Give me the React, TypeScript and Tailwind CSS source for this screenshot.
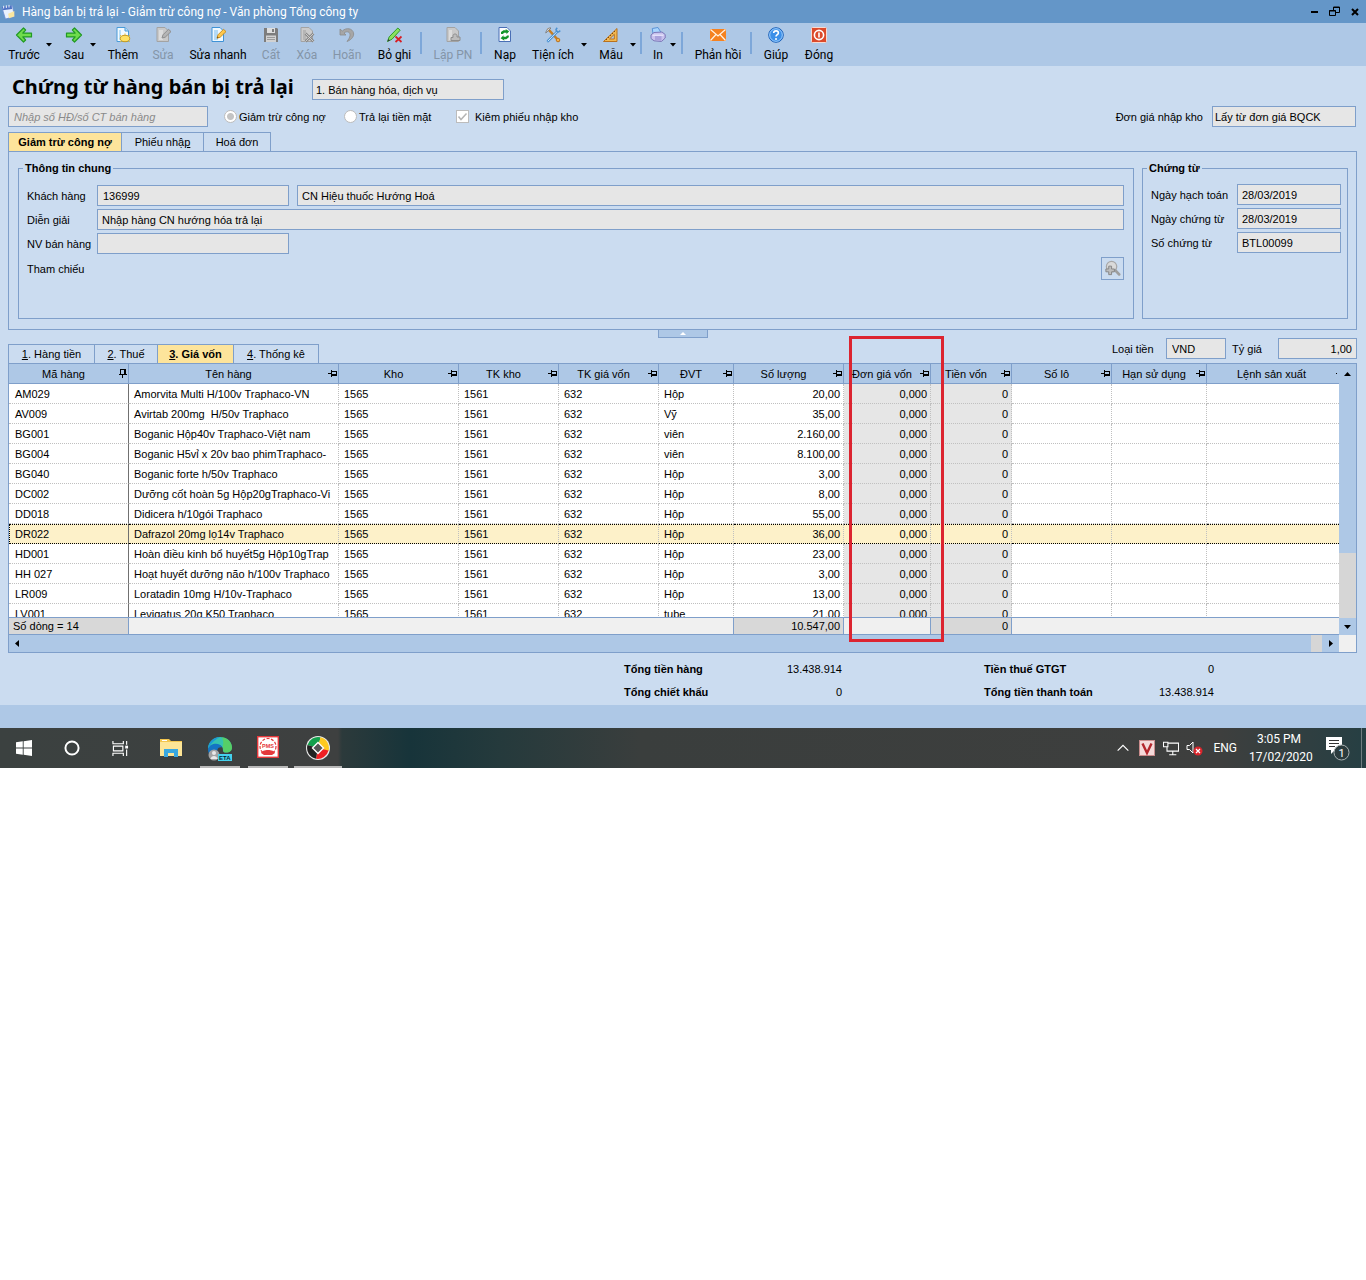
import type { ReactNode } from "react";

const rows = [
    ["AM029", "Amorvita Multi H/100v Traphaco-VN", "Hộp", "20,00"],
    ["AV009", "Avirtab 200mg  H/50v Traphaco", "Vỹ", "35,00"],
    ["BG001", "Boganic Hộp40v Traphaco-Việt nam", "viên", "2.160,00"],
    ["BG004", "Boganic H5vỉ x 20v bao phimTraphaco-", "viên", "8.100,00"],
    ["BG040", "Boganic forte h/50v Traphaco", "Hộp", "3,00"],
    ["DC002", "Dưỡng cốt hoàn 5g Hộp20gTraphaco-Vi", "Hộp", "8,00"],
    ["DD018", "Didicera h/10gói Traphaco", "Hộp", "55,00"],
    ["DR022", "Dafrazol 20mg lọ14v Traphaco", "Hộp", "36,00"],
    ["HD001", "Hoàn điều kinh bổ huyết5g Hộp10gTrap", "Hộp", "23,00"],
    ["HH 027", "Hoạt huyết dưỡng não h/100v Traphaco", "Hộp", "3,00"],
    ["LR009", "Loratadin 10mg H/10v-Traphaco", "Hộp", "13,00"],
    ["LV001", "Levigatus 20g K50 Traphaco", "tube", "21,00"],
];

const selected = "DR022";

const headers = ["Mã hàng", "Tên hàng", "Kho", "TK kho", "TK giá vốn", "ĐVT", "Số lượng", "Đơn giá vốn", "Tiền vốn", "Số lô", "Hạn sử dụng", "Lệnh sản xuất"];

function Cols(){
    return(
        <colgroup>
            <col className="w-[120px]" />
            <col className="w-[210px]" />
            <col className="w-[120px]" />
            <col className="w-[100px]" />
            <col className="w-[100px]" />
            <col className="w-[75px]" />
            <col className="w-[110px]" />
            <col className="w-[87px]" />
            <col className="w-[81px]" />
            <col className="w-[100px]" />
            <col className="w-[95px]" />
            <col />
        </colgroup>
    );
}

function Icon({children, className = "size-[18px]"}: {children: ReactNode, className?: string}){
    return(
        <svg viewBox="0 0 18 18" className={className} fill="none" aria-hidden="true">
            {children}
        </svg>
    );
}

function ArrowIcon({flip}: {flip?: boolean}){
    return(
        <Icon>
            <path
                d="M1.5 9 8.5 2 10.6 4 7.8 7.1H16.5V10.9H7.8L10.6 14 8.5 16Z"
                transform={flip ? "matrix(-1 0 0 1 18 0)" : undefined}
                fill="#6fdc4c" stroke="#219a24" strokeWidth="1.2" strokeLinejoin="round"
            />
        </Icon>
    );
}

const page = "M3 1.5H11L14.5 5V15.5H3Z";

const icons: Record<string, ReactNode> = {
    back: <ArrowIcon />,
    next: <ArrowIcon flip />,
    add: (
        <Icon>
            <path d={page} fill="#f2faff" stroke="#4a9bd8" />
            <path d="M11 1.5V5H14.5" fill="#b5dcf7" stroke="#4a9bd8" />
            <path d="M5 4V14H7V4Z" fill="#b9dff8" />
            <ellipse cx="11" cy="12.5" rx="4.7" ry="3.2" fill="#ffe263" stroke="#c99a1e" />
            <path d="M6 9 7.5 10.5M11 7.5V9M16 9 14.5 10.5M6 16 7.5 15M16 16 15 15" stroke="#e5bd3b" />
        </Icon>
    ),
    edit: (
        <Icon>
            <path d={page} fill="#c9c9c9" stroke="#a3a3a3" />
            <path d="M5 4H9V14H5Z" fill="#dcdcdc" />
            <path d="M8 12 9 8.8 14.5 3.3 17 5.6 11.2 11.2Z" fill="#b5b5b5" stroke="#8e8e8e" />
        </Icon>
    ),
    quick: (
        <Icon>
            <path d={page} fill="#eef8ff" stroke="#3f92d6" />
            <path d="M5 4H9V14H5Z" fill="#b3daf7" />
            <path d="M8 12.2 9 8.8 14.5 3.3 17 5.6 11.2 11.2Z" fill="#ffc84d" stroke="#c98f24" />
            <path d="M8 12.2 8.5 10.5 9.7 11.7Z" fill="#6b4a12" />
        </Icon>
    ),
    save: (
        <Icon>
            <path d="M2 2H15L16 3V16H2Z" fill="#7d7d7d" />
            <path d="M5 2H13V7H5Z" fill="#dedede" />
            <path d="M10 3H12V6H10Z" fill="#7d7d7d" />
            <path d="M4 9.5H14V16H4Z" fill="#d2d2d2" />
            <path d="M5 11.5H13M5 13.5H13" stroke="#9a9a9a" />
        </Icon>
    ),
    remove: (
        <Icon>
            <path d={page} fill="#cbcbcb" stroke="#a3a3a3" />
            <path d="M5 4H8V14H5Z" fill="#b5b5b5" />
            <path d="M7.5 7.5 15.5 15.5M15.5 7.5 7.5 15.5" stroke="#8a8a8a" strokeWidth="2.6" />
            <path d="M7.5 7.5 15.5 15.5M15.5 7.5 7.5 15.5" stroke="#dcdcdc" strokeWidth="0.8" />
        </Icon>
    ),
    undo: (
        <Icon>
            <path d="M2 3V9H8L6 7C9 4.6 12.5 6 12 9.5C11.8 11.5 10.5 13.5 9 15.5C14 13.5 16.3 10 15.5 6.8C14.5 2.5 8.5 1 4.3 5Z" fill="#a6a6a6" stroke="#8c8c8c" strokeWidth="0.8" />
        </Icon>
    ),
    unpost: (
        <Icon>
            <path d="M1.5 15.5 3.2 10.8 11.8 2 14.2 4.2 6 13.2Z" fill="#8be05e" stroke="#2f9b2c" />
            <path d="M1.5 15.5 2.4 13 4 14.5Z" fill="#333" />
            <path d="M9.5 10.5 15.5 16M15.5 10.5 9.5 16" stroke="#d81e24" strokeWidth="1.7" />
        </Icon>
    ),
    receipt: (
        <Icon>
            <path d={page} fill="#c9c9c9" stroke="#a3a3a3" />
            <path d="M5 4H8V14H5Z" fill="#dcdcdc" />
            <path d="M7 14V11.5H9V9.5C9 7.5 13 7.5 13 9.5V11H16V14.5H7Z" fill="#bdbdbd" stroke="#8e8e8e" />
        </Icon>
    ),
    reload: (
        <Icon>
            <path d={page} fill="#fdfdff" stroke="#4a6fb5" />
            <path d="M5 8V6L7.5 4.3H10L9.5 3 13.2 5.3 10.5 8.2V6.7H8L7 8Z" fill="#11952a" />
            <path d="M12.8 9.5V11.3L10.3 13.2H8L8.5 14.7 4.6 12.2 7.5 9.3V10.8H10L11 9.5Z" fill="#11952a" />
        </Icon>
    ),
    tools: (
        <Icon>
            <path d="M4.5 3.5 14.5 14.5" stroke="#c77e22" strokeWidth="2.6" strokeLinecap="round" />
            <path d="M1.8 7 7 2C4.8 1.3 2.3 3.6 1.8 7Z" fill="#e4e4e4" stroke="#7f7f7f" />
            <path d="M4 15 13 5.8" stroke="#4b91d2" strokeWidth="2.6" strokeLinecap="round" />
            <path d="M4 15 13 5.8" stroke="#cfe7fa" strokeLinecap="round" />
            <path d="M13.2 1.8 12 3.5 12.5 5.5 14.6 6 16.3 4.7" stroke="#4b91d2" strokeWidth="1.5" />
            <circle cx="14" cy="14" r="1.8" fill="#f4b04c" stroke="#b97420" />
        </Icon>
    ),
    template: (
        <Icon>
            <path d="M1.5 15.5 15 2.5V15.5Z" fill="#f3b951" stroke="#b9711d" />
            <path d="M7.5 13 12.3 8.3V13Z" fill="#aec8e6" stroke="#b9711d" />
            <path d="M4 13 5 14M6 11 7 12M8 9 9 10M10 7 11 8M12 5 13 6" stroke="#7d4a0e" />
        </Icon>
    ),
    print: (
        <Icon>
            <path d="M4 8 3.3 2.5 9 1.5 12 6.5Z" fill="#a8d5ff" stroke="#5b93d6" />
            <path d="M2 9 5 6.5 13 6 16.2 8.5V12L12.5 15.5 5 14.8 2 12.5Z" fill="#c9c3ee" stroke="#7d78b8" />
            <path d="M6 10H12.5V15L6 14Z" fill="#aaa2dc" />
            <path d="M3.5 9.2H14.5" stroke="#efeeff" />
        </Icon>
    ),
    feedback: (
        <Icon>
            <path d="M1 3H17V15H1Z" fill="#f58220" />
            <path d="M1.5 3.5 9 10 16.5 3.5M1.5 14.5 7 8.5M16.5 14.5 11 8.5" stroke="#fff3e4" strokeWidth="1.2" />
        </Icon>
    ),
    help: (
        <Icon>
            <circle cx="9" cy="9" r="7.3" fill="#3b8fe8" stroke="#1f62b8" />
            <circle cx="9" cy="9" r="6.3" stroke="#9fcfff" />
            <path d="M6.7 7C6.7 4.2 11.4 4.2 11.4 7C11.4 8.6 9 8.8 9 10.6" stroke="#fff" strokeWidth="1.6" />
            <circle cx="9" cy="13" r="1" fill="#fff" />
        </Icon>
    ),
    close: (
        <Icon>
            <rect x="1.5" y="1.5" width="15" height="15" rx="1" fill="#dc4a2b" stroke="#f7d9cf" />
            <circle cx="9" cy="9" r="4.6" stroke="#fff" strokeWidth="1.6" />
            <path d="M9 6.5V11.5" stroke="#fff" strokeWidth="1.6" />
        </Icon>
    ),
};

const toolbar = [
    {label: "Trước", icon: "back", box: "w-[44px]"},
    {arrow: true, box: ""},
    {label: "Sau", icon: "next", box: "w-[32px] ml-[6px]"},
    {arrow: true, box: ""},
    {label: "Thêm", icon: "add", box: "w-[40px] ml-[7px]"},
    {label: "Sửa", icon: "edit", box: "w-[40px]", off: true},
    {label: "Sửa nhanh", icon: "quick", box: "w-[70px]"},
    {label: "Cất", icon: "save", box: "w-[36px]", off: true},
    {label: "Xóa", icon: "remove", box: "w-[36px]", off: true},
    {label: "Hoãn", icon: "undo", box: "w-[44px]", off: true},
    {label: "Bỏ ghi", icon: "unpost", box: "w-[51px]"},
    {sep: true, box: ""},
    {label: "Lập PN", icon: "receipt", box: "w-[54px] ml-1", off: true},
    {sep: true, box: ""},
    {label: "Nạp", icon: "reload", box: "w-[40px] ml-[3px]"},
    {label: "Tiện ích", icon: "tools", box: "w-[56px]"},
    {arrow: true, box: ""},
    {label: "Mẫu", icon: "template", box: "w-[38px] ml-[5px]"},
    {arrow: true, box: ""},
    {sep: true, box: "ml-1"},
    {label: "In", icon: "print", box: "w-[24px] ml-1"},
    {arrow: true, box: ""},
    {sep: true, box: "ml-[5px]"},
    {label: "Phản hồi", icon: "feedback", box: "w-[60px] ml-[5px]"},
    {sep: true, box: "ml-[2px]"},
    {label: "Giúp", icon: "help", box: "w-[40px] ml-1"},
    {label: "Đóng", icon: "close", box: "w-[46px]"},
];

function Toolbar(){
    return(
        <div className="flex h-[43px] bg-[#aec8e6] pl-[2px] font-[Roboto,sans-serif] text-xs">
            {toolbar.map((item, key) => {
                if(item.sep) return <div key={key} className={`mt-[9px] h-[22px] w-[2px] bg-[#7da7d9] ${item.box}`} />;
                if(item.arrow) return(
                    <button key={key} aria-label="Mở danh sách" className="h-full w-[6px]">
                        <svg viewBox="0 0 6 4" className="h-[4px] w-[6px]"><path d="M0 0H6L3 3.5Z" fill="#000" /></svg>
                    </button>
                );
                return(
                    <button key={key} disabled={item.off} className={`flex shrink-0 flex-col items-center whitespace-nowrap pt-[3px] disabled:text-[#8495a8] ${item.box}`}>
                        {icons[item.icon as string]}
                        <span className="mt-[3px] leading-4">{item.label}</span>
                    </button>
                );
            })}
        </div>
    );
}

function Field({value, label, className = ""}: {value: string, label: string, className?: string}){
    return <input readOnly aria-label={label} defaultValue={value} className={`h-[21px] border border-[#7f9fca] bg-[#e6e6e6] px-1 outline-none ${className}`} />;
}

function Pin({down}: {down?: boolean}){
    return(
        <svg viewBox="0 0 9 9" className="size-[9px] shrink-0" shapeRendering="crispEdges" aria-hidden="true">
            {down
                ? <path d="M2 0H8V1H2ZM2 1H3V5H2ZM6 1H8V5H6ZM1 5H9V6H1ZM4 6H5V9H4Z" fill="#000" />
                : <path d="M0 4H3V5H0ZM3 1H4V8H3ZM4 2H9V3H4ZM8 3H9V5H8ZM4 5H9V7H4Z" fill="#000" />}
        </svg>
    );
}

function VoucherInfo(){
    return(
        <div className="flex h-[179px] gap-2 border border-[#7f9fca] px-[9px] pb-[10px] pr-2 pt-2">
            <fieldset className="min-w-0 flex-1 border border-[#7f9fca] pl-2 pr-[9px]">
                <legend className="-ml-1 px-[2px] font-bold leading-4">Thông tin chung</legend>
                <div className="flex flex-col gap-[3px] pt-[9px]">
                    <div className="flex items-center">
                        <span className="w-[70px] shrink-0">Khách hàng</span>
                        <Field label="Mã khách hàng" value="136999" className="w-[192px] pl-[5px]" />
                        <Field label="Tên khách hàng" value="CN Hiệu thuốc Hướng Hoá" className="ml-2 min-w-0 flex-1" />
                    </div>
                    <div className="flex items-center">
                        <span className="w-[70px] shrink-0">Diễn giải</span>
                        <Field label="Diễn giải" value="Nhập hàng CN hướng hóa trả lại" className="min-w-0 flex-1" />
                    </div>
                    <div className="flex items-center">
                        <span className="w-[70px] shrink-0">NV bán hàng</span>
                        <Field label="NV bán hàng" value="" className="w-[192px]" />
                    </div>
                    <div className="flex h-[23px] items-center justify-between">
                        <span>Tham chiếu</span>
                        <button aria-label="Tìm chứng từ tham chiếu" className="flex size-[23px] items-center justify-center border border-[#7f9fca]">
                            <Icon className="size-[17px]">
                                <circle cx="8" cy="7" r="5.5" fill="#dadada" stroke="#a8a8a8" strokeWidth="1.3" />
                                <path d="M12 11 16 15.2" stroke="#9e9e9e" strokeWidth="3" strokeLinecap="round" />
                                <path d="M5 6.5H8V9.5H11V12.5H8V15.5H5V12.5H2V9.5H5Z" fill="#bdbdbd" stroke="#858585" />
                            </Icon>
                        </button>
                    </div>
                </div>
            </fieldset>
            <fieldset className="w-[206px] border border-[#7f9fca] pl-2 pr-[6px]">
                <legend className="-ml-1 px-[2px] font-bold leading-4">Chứng từ</legend>
                <div className="flex flex-col gap-[3px] pt-2">
                    {[["Ngày hạch toán", "28/03/2019"], ["Ngày chứng từ", "28/03/2019"], ["Số chứng từ", "BTL00099"]].map(([label, value]) => (
                        <div key={label} className="flex items-center">
                            <span className="w-[86px] shrink-0">{label}</span>
                            <Field label={label} value={value} className="w-[104px]" />
                        </div>
                    ))}
                </div>
            </fieldset>
        </div>
    );
}

function ItemGrid(){
    const cell = "h-5 overflow-hidden whitespace-pre border-b border-r border-dotted p-0";
    return(
        <div className="border border-[#7f9fca]">
            <div className="flex">
                <div className="min-w-0 flex-1">
                    <div className="h-[253px] overflow-hidden bg-white">
                        <table className="w-full table-fixed border-separate border-spacing-0">
                            <Cols />
                            <thead>
                                <tr>
                                    {headers.map((name, key) => (
                                        <th key={name} className={`h-5 border-b border-[#7f9fca] bg-[#aec8e6] p-0 font-normal ${key < 11 ? "border-r" : ""}`}>
                                            <div className="flex items-center whitespace-nowrap pr-px">
                                                <span className="min-w-0 flex-1">{name}</span>
                                                {key < 11 ? <Pin down={key === 0} /> : <i className="mr-px size-px bg-black" />}
                                            </div>
                                        </th>
                                    ))}
                                </tr>
                            </thead>
                            <tbody>
                                {rows.map(([code, name, unit, qty]) => {
                                    const on = code === selected;
                                    const line = on ? "border-b-black border-t border-t-black border-r-[#c0c0c0]" : "border-[#c0c0c0]";
                                    const grey = on ? "" : "bg-[#e6e6e6]";
                                    return(
                                        <tr key={code} className={on ? "bg-[#fdf1c9]" : ""}>
                                            <td className={`${cell} ${line} ${on ? "border-l border-l-black pl-[5px]" : "pl-[6px]"}`} style={{borderRightStyle: "solid", borderRightColor: "#707070"}}>{code}</td>
                                            <td className={`${cell} pl-[5px] ${line}`}>{name}</td>
                                            <td className={`${cell} pl-[5px] ${line}`}>1565</td>
                                            <td className={`${cell} pl-[5px] ${line}`}>1561</td>
                                            <td className={`${cell} pl-[5px] ${line}`}>632</td>
                                            <td className={`${cell} pl-[5px] ${line}`}>{unit}</td>
                                            <td className={`${cell} pr-[3px] text-right ${line}`}>{qty}</td>
                                            <td className={`${cell} pr-[3px] text-right ${line} ${grey}`}>0,000</td>
                                            <td className={`${cell} pr-[3px] text-right ${line} ${grey}`}>0</td>
                                            <td className={`${cell} ${line}`}></td>
                                            <td className={`${cell} ${line}`}></td>
                                            <td className={`${cell} ${line} border-r-0`}></td>
                                        </tr>
                                    );
                                })}
                            </tbody>
                        </table>
                    </div>
                    <table className="w-full table-fixed border-separate border-spacing-0 bg-[#f0f0f0]">
                        <Cols />
                        <tbody>
                            <tr className="leading-4 [&>td]:h-[18px] [&>td]:border-y [&>td]:border-[#7f9fca]">
                                <td className="border-r bg-[#d8d8d8] p-0 pl-1">Số dòng = 14</td>
                                <td colSpan={5} className="border-r p-0"></td>
                                <td className="border-r bg-[#d8d8d8] p-0 pr-[3px] text-right">10.547,00</td>
                                <td className="border-r p-0"></td>
                                <td className="border-r bg-[#d8d8d8] p-0 pr-[3px] text-right">0</td>
                                <td colSpan={3} className="p-0"></td>
                            </tr>
                        </tbody>
                    </table>
                </div>
                <div className="flex w-[17px] flex-col items-center bg-[#aec8e6]">
                    <button aria-label="Cuộn lên" className="flex h-5 w-full items-center justify-center">
                        <svg viewBox="0 0 7 4" className="h-[4px] w-[7px]"><path d="M0 4H7L3.5 0Z" /></svg>
                    </button>
                    <div className="flex-1" />
                    <div className="h-[65px] w-full bg-[#d6d6d6]" />
                    <button aria-label="Cuộn xuống" className="flex h-[17px] w-full items-center justify-center">
                        <svg viewBox="0 0 7 4" className="h-[4px] w-[7px]"><path d="M0 0H7L3.5 4Z" /></svg>
                    </button>
                </div>
            </div>
            <div className="flex h-[17px] bg-[#aec8e6]">
                <button aria-label="Cuộn trái" className="flex h-full w-4 items-center justify-center">
                    <svg viewBox="0 0 4 7" className="h-[7px] w-[4px]"><path d="M4 0V7L0 3.5Z" /></svg>
                </button>
                <div className="flex-1" />
                <div className="w-[11px] bg-[#d6d6d6]" />
                <button aria-label="Cuộn phải" className="flex h-full w-[17px] items-center justify-center">
                    <svg viewBox="0 0 4 7" className="h-[7px] w-[4px]"><path d="M0 0V7L4 3.5Z" /></svg>
                </button>
                <div className="w-[17px] bg-[#f0f0f0]" />
            </div>
        </div>
    );
}

function Total({label, value}: {label: string, value: string}){
    return(
        <div className="flex h-[23px] items-center justify-between">
            <dt className="font-bold">{label}</dt>
            <dd>{value}</dd>
        </div>
    );
}

function Taskbar(){
    return(
        <footer className="flex h-10 items-stretch justify-between bg-[linear-gradient(90deg,#3b4140_0,#3e4040_338px,#2c3a3b_342px,#17343a_410px,#253a3c_500px,#3a3e3d_640px,#3e3f3e_1220px,#263f43_1366px)] font-[Roboto,sans-serif] text-xs text-white">
            <div className="flex">
                <button aria-label="Start" className="flex w-12 items-center justify-center">
                    <Icon className="size-4"><path d="M0 2.6 7.6 1.5V8.5H0ZM8.6 1.4 18 0V8.5H8.6ZM0 9.5H7.6V16.5L0 15.4ZM8.6 9.5H18V18L8.6 16.6Z" fill="#fff" /></Icon>
                </button>
                <button aria-label="Cortana" className="flex w-12 items-center justify-center">
                    <Icon className="size-4"><circle cx="9" cy="9" r="7.4" stroke="#fff" strokeWidth="2.2" /></Icon>
                </button>
                <button aria-label="Task view" className="flex w-12 items-center justify-center">
                    <Icon className="size-[17px]"><path d="M1 1V4H12V1M1 17V14H12V17M1.5 6.5H11.5V11.5H1.5ZM15.5 1V5M15.5 10V17" stroke="#fff" strokeWidth="1.2" /><path d="M14 6H17V9H14Z" fill="#fff" /></Icon>
                </button>
                <button aria-label="File Explorer" className="ml-1 flex w-[46px] items-center justify-center">
                    <svg viewBox="0 0 22 20" className="h-5 w-[22px]">
                        <path d="M0 1H9L11 3H22V18H0Z" fill="#f3c64f" />
                        <path d="M0 4H22V18H0Z" fill="#fde596" />
                        <path d="M2 2H7V3H2Z" fill="#fff" />
                        <path d="M4 19V11H18V19H14V15H8V19Z" fill="#3aa8e0" />
                    </svg>
                </button>
                <button aria-label="Microsoft Edge Beta" className="ml-[2px] flex h-full w-12 flex-col items-center justify-end px-1">
                    <svg viewBox="0 0 24 24" className="mb-[5px] h-6 w-6 shrink-0">
                        <path d="M0 12C0 5 5.500 0 12 0C19 0 24 4.800 24 10.500C24 14.500 20.500 16 17 15.500C14 15 15.500 13 14.500 10.500C13 7 5 6 0 12Z" fill="#35c3b1" />
                        <path d="M14 .2C20 .8 24 5.500 24 10.500C24 14.500 20.500 16 17 15.500C14.500 15 16 13 14.500 10C16 6 15 3 14 .2Z" fill="#62d34f" opacity=".75" />
                        <path d="M0 12C2 5.500 12 5 14.500 10.500C10 9 8 13 10 17L11 22C4 22 0 18 0 12Z" fill="#1474c4" />
                        <path d="M0 11C1 4 6 0 12 0C8 2 4 5 0 11Z" fill="#1b9ad8" />
                        <circle cx="6" cy="18" r="5.500" fill="#a3a3a3" />
                        <circle cx="6" cy="16" r="2" fill="#e8e8e8" />
                        <path d="M2.500 22C3 18 9 18 9.500 22Z" fill="#e8e8e8" />
                        <rect x="10" y="17" width="14" height="7" fill="#45d2ee" />
                        <text x="11" y="23" fontSize="6" fontWeight="700" fontFamily="Liberation Sans, sans-serif" fill="#062733">ETA</text>
                    </svg>
                    <i className="h-[2px] w-10 shrink-0 bg-[#b9b9b9]" />
                </button>
                <button aria-label="PMS" className="flex h-full w-12 flex-col items-center justify-end">
                    <svg viewBox="0 0 22 22" className="mb-[8px] size-[22px] shrink-0">
                        <rect x=".7" y=".7" width="20.600" height="20.600" fill="#fff" stroke="#e5383b" strokeWidth="1.400" />
                        <circle cx="11" cy="10.500" r="8" fill="none" stroke="#e5383b" strokeWidth="1.200" strokeDasharray="3 1.500" />
                        <path d="M4 17C5 13 17 13 18 17L15 19H7Z" fill="#e5383b" />
                        <text x="11" y="11.500" textAnchor="middle" fontSize="5.500" fontWeight="700" fontFamily="Liberation Sans, sans-serif" fill="#e5383b">PMS</text>
                    </svg>
                    <i className="h-[2px] w-10 shrink-0 bg-[#b9b9b9]" />
                </button>
                <button aria-label="UltraViewer" className="ml-[2px] flex h-full w-12 flex-col items-center justify-end">
                    <svg viewBox="0 0 24 24" className="mb-[6px] size-6 shrink-0">
                        <circle cx="12" cy="12" r="12" fill="#e9e9e9" />
                        <path d="M12 12 1.500 9A11 11 0 0 1 14.500 1.300Z" fill="#12a04c" />
                        <path d="M12 12 14.500 1.300A11 11 0 0 1 22.500 15Z" fill="#ffc91f" />
                        <path d="M12 12 22.500 14.500A11 11 0 0 1 10 22.800Z" fill="#f01f23" />
                        <path d="M12 12 10 22.800A11 11 0 0 1 1.500 9Z" fill="#222" />
                        <path d="M12 6.500 17.500 12 12 17.500 6.500 12Z" fill="#555" stroke="#fff" strokeWidth="1.300" />
                    </svg>
                    <i className="h-[2px] w-12 shrink-0 bg-[#b9b9b9]" />
                </button>
            </div>
            <div className="flex items-center">
                <Icon className="size-3"><path d="M1 13 9 5 17 13" stroke="#fff" strokeWidth="1.8" /></Icon>
                <svg viewBox="0 0 16 16" className="ml-[10px] size-4" aria-hidden="true">
                    <rect x=".5" y=".5" width="15" height="15" fill="#f5dada" stroke="#c98c8c" />
                    <path d="M3.500 3.500 8 13 12.500 3.500" fill="none" stroke="#b3272d" strokeWidth="2.400" />
                </svg>
                <Icon className="ml-2 size-4"><path d="M5.500 3.500H17.500V12.500H4.500V8M11 12.500V16M7 16.500H15M.5 2.500H5.500V7.500H.5Z" stroke="#fff" strokeWidth="1.2" /></Icon>
                <svg viewBox="0 0 17 16" className="ml-[7px] h-4 w-[17px]" aria-hidden="true">
                    <path d="M1 5.500H3.500L7 2V13L3.500 9.500H1Z" fill="none" stroke="#fff" />
                    <circle cx="12" cy="11" r="4.500" fill="#d9262c" />
                    <path d="M10 9 14 13M14 9 10 13" stroke="#fff" strokeWidth="1.200" />
                </svg>
                <span className="ml-[10px]">ENG</span>
                <div className="ml-3 w-[60px] text-center leading-[18px]">
                    <div>3:05 PM</div>
                    <div>17/02/2020</div>
                </div>
                <button aria-label="Thông báo" className="ml-4 flex h-full w-[26px] items-center">
                    <svg viewBox="0 0 26 26" className="size-[26px]">
                        <path d="M1 2H17V15H10L6 19V15H1Z" fill="#fff" />
                        <path d="M4 5.500H14M4 8.500H14M4 11.500H10" stroke="#333" />
                        <circle cx="16.500" cy="17.500" r="7.500" fill="#2b3b3d" stroke="#a9b1b2" />
                        <text x="16.500" y="21.500" textAnchor="middle" fontSize="11" fontFamily="Roboto, sans-serif" fill="#fff">1</text>
                    </svg>
                </button>
                <i className="ml-[10px] mr-1 h-full w-px bg-[#6f7d80]" />
            </div>
        </footer>
    );
}

export default function App(){
    const tab = "h-full border-r border-t border-[#7f9fca]";
    const activeTab = "h-full border-r border-t border-[#7f9fca] bg-[#fde49b] font-bold";
    return(
        <div className="bg-[#cbdcf0] font-['Liberation_Sans',sans-serif] text-[11px] leading-4 text-black">
            <header className="flex h-[23px] items-center bg-[#6496c8] pl-[1px] pr-[7px] font-[Roboto,sans-serif] text-xs text-white">
                <Icon className="size-4">
                    <path d="M1 4 13 2 15 14 5 17Z" fill="#e9f1ff" stroke="#6f8fd0" />
                    <path d="M1 3.500 12 2 12.500 5.500 2 7Z" fill="#4f73c4" />
                    <path d="M3 2V5M6 1.500V4.500M9 1V4" stroke="#fff" />
                    <path d="M8 11 15 8V14L9 16Z" fill="#fbe7a0" />
                </Icon>
                <h1 className="ml-[5px] flex-1">Hàng bán bị trả lại - Giảm trừ công nợ - Văn phòng Tổng công ty</h1>
                <div className="flex items-center gap-[11px]">
                    <button aria-label="Thu nhỏ"><svg viewBox="0 0 7 11" className="h-[11px] w-[7px]"><path d="M0 5H7V7H0Z" /></svg></button>
                    <button aria-label="Khôi phục"><svg viewBox="0 0 11 11" className="h-[11px] w-[11px]" fill="none" stroke="#000"><path d="M4.500 4V1H10.500V6.500H7M.5 4.500H6.500V9.500H.5ZM4 1.500H11M0 5H7" /></svg></button>
                    <button aria-label="Đóng cửa sổ"><svg viewBox="0 0 8 8" className="size-2" stroke="#000" strokeWidth="2"><path d="M1 1 7 7M7 1 1 7" /></svg></button>
                </div>
            </header>
            <Toolbar />
            <main className="pl-2 pr-[9px]">
                <div className="flex h-10 items-start pt-[13px]">
                    <h2 className="w-[304px] whitespace-nowrap pl-1 font-['Noto_Sans',sans-serif] text-xl font-bold leading-4">Chứng từ hàng bán bị trả lại</h2>
                    <Field label="Loại chứng từ" value="1. Bán hàng hóa, dịch vụ" className="w-[192px] pl-[3px]" />
                </div>
                <div className="flex items-center">
                    <input aria-label="Số chứng từ bán hàng" placeholder="Nhập số HĐ/số CT bán hàng" className="h-[21px] w-[200px] border border-[#7f9fca] bg-[#e6e6e6] px-[5px] italic placeholder:text-[#8a8a8a]" />
                    <label className="ml-4 flex w-[120px] items-center gap-[2px]">
                        <input type="radio" name="kind" defaultChecked className="size-[13px] appearance-none rounded-full border border-[#bcbcbc] bg-white bg-[radial-gradient(circle,#c4c4c4_3px,#fff_4px)]" />
                        Giảm trừ công nợ
                    </label>
                    <label className="flex w-[112px] items-center gap-[2px]">
                        <input type="radio" name="kind" className="size-[13px] appearance-none rounded-full border border-[#bcbcbc] bg-white" />
                        Trả lại tiền mặt
                    </label>
                    <label className="flex flex-1 items-center gap-[6px]">
                        <span className="grid size-[13px]">
                            <input type="checkbox" defaultChecked className="col-start-1 row-start-1 size-[13px] appearance-none border border-[#bcbcbc] bg-white" />
                            <svg viewBox="0 0 13 13" className="pointer-events-none col-start-1 row-start-1 size-[13px]" fill="none" stroke="#b5b5b5" strokeWidth="1.500"><path d="M2.500 6.500 5 9.500 10.500 3.500" /></svg>
                        </span>
                        Kiêm phiếu nhập kho
                    </label>
                    <span className="mr-[9px]">Đơn giá nhập kho</span>
                    <Field label="Đơn giá nhập kho" value="Lấy từ đơn giá BQCK" className="mr-px w-[144px] pl-[2px]" />
                </div>
                <div className="mt-[5px] flex h-[19px] border-l border-[#7f9fca]">
                    <button className={`${activeTab} w-[113px]`}>Giảm trừ công nợ</button>
                    <button className={`${tab} w-[82px]`}>Phiếu nhậ<u>p</u></button>
                    <button className={`${tab} w-[67px]`}>Hoá đơn</button>
                </div>
                <VoucherInfo />
                <div className="flex justify-center">
                    <button aria-label="Thu gọn" className="flex h-[8px] w-[50px] items-center justify-center border border-t-0 border-[#7f9fca] bg-[#aec8e6]">
                        <svg viewBox="0 0 6 3" className="h-[3px] w-[6px]"><path d="M0 3H6L3 0Z" fill="#fff" /></svg>
                    </button>
                </div>
                <section className="relative">
                    <div className="flex h-[25px] items-start justify-between">
                        <div className="mt-[6px] flex h-[19px] border-l border-[#7f9fca]">
                            <button className={`${tab} w-[86px]`}><u>1</u>. Hàng tiền</button>
                            <button className={`${tab} w-[63px]`}><u>2</u>. Thuế</button>
                            <button className={`${activeTab} w-[76px]`}><u>3</u>. Giá vốn</button>
                            <button className={`${tab} w-[85px]`}><u>4</u>. Thống kê</button>
                        </div>
                        <div className="flex items-center">
                            <span className="w-[54px]">Loại tiền</span>
                            <Field label="Loại tiền" value="VND" className="w-[60px] pl-[5px]" />
                            <span className="ml-[6px] w-[46px]">Tỷ giá</span>
                            <Field label="Tỷ giá" value="1,00" className="w-[79px] text-right" />
                        </div>
                    </div>
                    <ItemGrid />
                    <div className="pointer-events-none absolute -top-[2px] left-[841px] h-[306px] w-[95px] border-[3px] border-[#dc2430]" />
                </section>
                <dl className="flex justify-end gap-[142px] pb-[2px] pr-[143px] pt-1">
                    <div className="w-[218px]">
                        <Total label="Tổng tiền hàng" value="13.438.914" />
                        <Total label="Tổng chiết khấu" value="0" />
                    </div>
                    <div className="w-[230px]">
                        <Total label="Tiền thuế GTGT" value="0" />
                        <Total label="Tổng tiền thanh toán" value="13.438.914" />
                    </div>
                </dl>
            </main>
            <div className="h-[23px] bg-[#aec8e6]" />
            <Taskbar />
        </div>
    );
}
